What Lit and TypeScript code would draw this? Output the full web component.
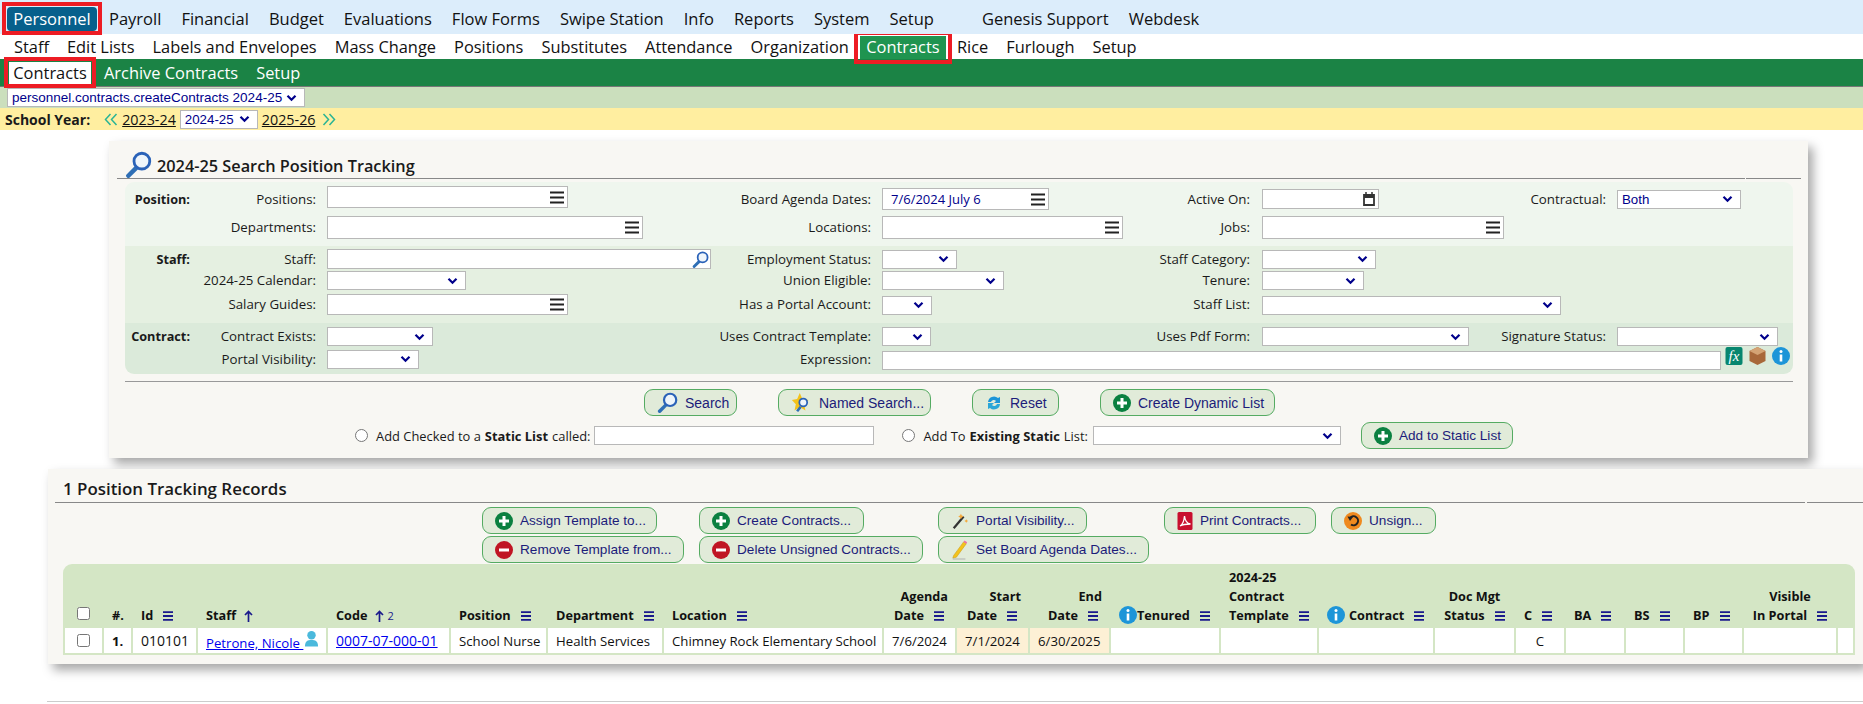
import { LitElement, html, css } from "lit";
import { customElement } from "lit/decorators.js";

const chev = html`<svg class="chev" width="11" height="8" viewBox="0 0 11 8"><path d="M1.500 1.800l4 4 4-4" fill="none" stroke="#00008b" stroke-width="2.200"/></svg>`;
const burger = html`<svg class="burger" width="14" height="13" viewBox="0 0 14 13"><path d="M0 1.500h14M0 6.500h14M0 11.500h14" stroke="#222" stroke-width="2"/></svg>`;
const tb = html`<svg class="tbi" width="10" height="10" viewBox="0 0 10 10"><path d="M0 1.200h10M0 5h10M0 8.800h10" stroke="#1a1a8c" stroke-width="1.800"/></svg>`;
const up = html`<svg class="upi" width="9" height="12" viewBox="0 0 9 12"><path d="M4.500 12V1.500M1 5l3.500-3.500L8 5" fill="none" stroke="#1a1a8c" stroke-width="1.700"/></svg>`;
const mag = (s = 18) => html`<svg width=${s} height=${s} viewBox="0 0 24 24"><path d="M3 22l7-7" stroke="#2f6fb5" stroke-width="4" stroke-linecap="round"/><circle cx="15" cy="9" r="7" fill="#eef5fb" stroke="#2a62b8" stroke-width="2.500"/></svg>`;
const plus = html`<svg width="18" height="18" viewBox="0 0 18 18"><circle cx="9" cy="9" r="9" fill="#0a8040"/><path d="M9 4v10M4 9h10" stroke="#fff" stroke-width="3"/></svg>`;
const minus = html`<svg width="18" height="18" viewBox="0 0 18 18"><circle cx="9" cy="9" r="9" fill="#c01524"/><path d="M4 9h10" stroke="#fff" stroke-width="3"/></svg>`;
const info = html`<svg class="info" width="18" height="18" viewBox="0 0 18 18"><circle cx="9" cy="9" r="9" fill="#1d95d8"/><circle cx="9" cy="4.500" r="1.500" fill="#fff"/><path d="M9 7.500v7" stroke="#fff" stroke-width="2.600"/></svg>`;
const dbl = (left: boolean) => html`<svg width="14" height="13" viewBox="0 0 14 13"><g transform=${left ? "" : "translate(14 0) scale(-1 1)"}><path d="M6.500 1L1.500 6.500l5 5.500M12.500 1l-5 5.500 5 5.500" fill="none" stroke="#2ab495" stroke-width="1.500"/></g></svg>`;
const icons: Record<string, unknown> = {
  search: mag(21),
  named: html`<svg width="21" height="21" viewBox="0 0 24 24"><path d="M10 1l3 7 7 1-5 5 1.500 7-6.500-4-6 4 1.500-7L1 9l6-1z" fill="#f3c21b"/><path d="M7 22l4-5" stroke="#2f6fb5" stroke-width="3"/><circle cx="14" cy="12" r="4.500" fill="#eef5fb" stroke="#2a62b8" stroke-width="2"/></svg>`,
  reset: html`<svg width="18" height="18" viewBox="0 0 18 18"><path d="M3 8a6 6 0 0 1 10-4l2-1v6h-6l2-2a3 3 0 0 0-5 1z" fill="#1d95d8"/><path d="M15 10a6 6 0 0 1-10 4l-2 1V9h6l-2 2a3 3 0 0 0 5-1z" fill="#2aa7d8"/></svg>`,
  plus, minus,
  wand: html`<svg width="18" height="20" viewBox="0 0 20 20"><path d="M3 18L14 5" stroke="#333" stroke-width="2.500"/><path d="M11 2l1 2 2 1-2 1-1 2-1-2-2-1 2-1zM17 8l.7 1.300 1.300.7-1.300.7-.7 1.300-.7-1.300L15 10l1.300-.7z" fill="#f4a93b"/></svg>`,
  pencil: html`<svg width="18" height="24" viewBox="0 0 20 24"><path d="M3 18L14 3l3 2L6 20l-4 1z" fill="#f3c21b" stroke="#c99a14" stroke-width=".6"/><path d="M14 3l1-1.500 3 2L17 5z" fill="#ee6fa8"/><path d="M2 22h14" stroke="#aaa" stroke-width="1"/></svg>`,
  pdf: html`<svg width="16" height="18" viewBox="0 0 15 18"><rect width="15" height="18" rx="1.500" fill="#c8102e"/><path d="M2.500 14c2-1 4-5 4.500-10 .5 5 3 7.500 6 8-3 0-7 0-10.500 2z" fill="none" stroke="#fff" stroke-width="1.300"/></svg>`,
  unsign: html`<svg width="18" height="18" viewBox="0 0 18 18"><circle cx="9" cy="9" r="9" fill="#ef8a1f"/><path d="M6 6a4.500 4.500 0 1 1 1 6.500" fill="none" stroke="#222" stroke-width="2"/><path d="M3.500 4.500L9 5 6 9z" fill="#222"/></svg>`,
};
const btn = (icon: string, label: string, w: number) =>
  html`<button class="btn" style="width:${w}px">${icons[icon]}<span>${label}</span></button>`;

const sel = (w: number, v = "") => html`<span class="sel" style="width:${w}px"><span>${v}</span>${chev}</span>`;
const pick = (w: number, v = "", h = 22) =>
  html`<span class="inp" style="width:${w}px;height:${h}px"><span class="val">${v}</span>${burger}</span>`;

/* Field grid helpers: col is a line of the section grid, row a grid row. */
const lab = (col: number, row: number, text: string, bold = false) =>
  html`<span class="lab ${bold ? "b" : ""}" style="grid-column:${col};grid-row:${row}">${text}</span>`;
const ctl = (col: number, row: number, content: unknown, nudge = 0, span = false) =>
  html`<div class="ctl" style="grid-column:${col}${span ? " / -1" : ""};grid-row:${row};margin-top:${nudge * 2}px">${content}</div>`;

type H = { l: string[]; w: number; ic?: unknown; k?: string; pre?: unknown };
const cols: H[] = [
  { l: [], w: 37, k: "c" }, { l: ["#."], w: 27 }, { l: ["Id"], w: 63, ic: tb }, { l: ["Staff"], w: 128, ic: up },
  { l: ["Code"], w: 121, ic: html`${up}<span class="two">2</span>` }, { l: ["Position"], w: 95, ic: tb }, { l: ["Department"], w: 114, ic: tb },
  { l: ["Location"], w: 218, ic: tb }, { l: ["Agenda", "Date"], w: 71, ic: tb, k: "r" }, { l: ["Start", "Date"], w: 71, ic: tb, k: "r" },
  { l: ["End", "Date"], w: 79, ic: tb, k: "r" }, { l: ["Tenured"], w: 108, ic: tb, pre: info }, { l: ["2024-25", "Contract", "Template"], w: 96, ic: tb },
  { l: ["Contract"], w: 114, ic: tb, pre: html`${info}<span class="sp4"></span>` }, { l: ["Doc Mgt", "Status"], w: 79, ic: tb, k: "c" }, { l: ["C"], w: 48, ic: tb },
  { l: ["BA"], w: 58, ic: tb }, { l: ["BS"], w: 57, ic: tb }, { l: ["BP"], w: 57, ic: tb }, { l: ["Visible", "In Portal"], w: 92, ic: tb, k: "c" },
  { l: [], w: 15 },
];
const gridCols = cols.map((c) => c.w + "px").join(" ");
const row: [unknown, string][] = [
  [html`<input type="checkbox" class="ck" />`, "c"], [html`<b>1.</b>`, ""], [html`<span class="num">010101</span>`, ""],
  [html`<a class="lnk low">Petrone, Nicole&nbsp;</a><svg class="person" width="15" height="18" viewBox="0 0 16 18"><circle cx="8" cy="5" r="4.500" fill="#4bb9dc"/><path d="M1 17c0-6 3-7 7-7s7 1 7 7z" fill="#4bb9dc"/></svg>`, ""],
  [html`<a class="lnk num">0007-07-000-01</a>`, ""], ["School Nurse", ""], ["Health Services", ""], ["Chimney Rock Elementary School", ""],
  ["7/6/2024", ""], ["7/1/2024", "tan"], ["6/30/2025", "tan"], ["", ""], ["", ""], ["", ""], ["", ""], ["C", "ctr"], ["", ""], ["", ""], ["", ""], ["", ""], ["", ""],
];

@customElement("app-root")
export class AppRoot extends LitElement {
  static styles = css`
    :host { display: block; width: 1863px; height: 704px; overflow: hidden; background: #fff; font-family: "Open Sans", "Noto Sans", sans-serif; font-size: 14px; color: #111; }
    * { box-sizing: border-box; }
    .nav { display: flex; white-space: nowrap; position: relative; }
    .it { display: block; }
    .n1 { height: 34px; background: #dcedfb; font-size: 16.500px; padding: 2px 0 0 2px; z-index: 3; }
    .n1 .it { padding: 0 10px; margin-top: 5px; line-height: 24px; }
    .redbox { display: block; flex: none; border: 4px solid #ed1c24; }
    .n1 .redbox { padding: 1px 1px 0; margin-right: -3px; height: 33px; }
    .n1 .act { display: block; width: 90px; height: 24px; line-height: 24px; text-align: center; background: #07608c; color: #fff; border-radius: 4px; }
    .n2 { height: 25px; font-size: 16.400px; padding-left: 5px; z-index: 2; }
    .n2 .it { padding: 0 9px; line-height: 25px; }
    .n2 .redbox { margin: -3px -4px -5px -4px; padding: 1px 1px 1px; height: 33px; position: relative; }
    .n2 .act { display: block; width: 88px; height: 23px; line-height: 22px; text-align: center; background: #1f9450; color: #fff; border-left: 1px solid #fff; border-right: 1px solid #fff; }
    .n3 { height: 28px; background: #1b8345; color: #fff; font-size: 16.400px; padding-left: 4px; border-bottom: 1px solid #777; z-index: 1; }
    .n3 .it { padding: 0 9px; line-height: 27px; }
    .n3 .redbox { margin: -2px -1px -3px 0; padding: 1px; height: 31px; }
    .n3 .act { display: block; width: 82px; height: 22px; line-height: 22px; text-align: center; background: #fff; color: #111; }
    .n4 { height: 21px; background: #cbdfbd; padding: 1px 0 0 7px; }
    .n5 { height: 22px; background: #ffeea0; display: flex; align-items: center; padding-left: 5px; }
    .n5 b { font-size: 14px; margin-right: 14px; color: #1a1a1a; }
    .n5 a { font-size: 14.300px; text-decoration: underline; color: #111; margin: 0 4px; }
    .sel, .inp { display: inline-flex; align-items: center; justify-content: space-between; background: #fff; border: 1px solid #b8b8b8; height: 19px; font: 13.300px "Liberation Sans", Arial, sans-serif; color: #00008b; padding: 0 7px 0 4px; flex: none; white-space: nowrap; }
    .chev { flex: none; }
    .inp { padding: 0 3px 0 8px; }
    .val { color: #00008b; font: 13px "Open Sans", sans-serif; }
    .panel { background: #f8f7f3; box-shadow: 5px 6px 10px rgba(0, 0, 0, .35); }
    .search { margin: 11px 0 0 109px; width: 1699px; height: 317px; padding: 0 0 0 8px; }
    h2 { margin: 0; display: flex; align-items: center; font-weight: 600; color: #1a1a1a; }
    .search h2 { height: 37px; padding: 12px 0 0 8px; gap: 5px; font-size: 16.300px; }
    .search h2 svg { margin-top: -3px; }
    .rule { display: flex; gap: 1px; height: 1px; margin-bottom: 3px; }
    .rule i { display: block; background: #888; height: 1px; }
    .fgrid { margin-left: 8px; width: 1668px; border-radius: 9px; overflow: hidden; font-size: 13.300px; color: #1a1a1a; }
    .sec { display: grid; grid-template-columns: 65px 126px 11px 393px 151px 11px 268px 100px 12px 241px 103px 11px 176px; }
    .s1 { background: #eff6ee; height: 64px; padding-top: 5px; grid-template-rows: 24px 24px; row-gap: 4px; }
    .s2 { background: #e5f0e1; height: 77px; padding-top: 3px; grid-template-rows: 20px 21px 24px; row-gap: 1px; }
    .s3 { background: #dbeada; height: 51px; padding-top: 4px; grid-template-rows: 19px 20px; row-gap: 3px; }
    .lab { justify-self: end; align-self: center; white-space: nowrap; line-height: 16px; margin-top: -1px; }
    .lab.b { font-weight: 700; font-size: 12.700px; }
    .ctl { display: flex; align-items: center; align-self: center; white-space: nowrap; }
    .ficons { display: flex; align-items: center; gap: 6px; margin: -8px 0 0 4px; }
    .hr { height: 1px; background: #999; margin: 7px 0 0 8px; width: 1668px; }
    .btn { display: inline-flex; align-items: center; gap: 7px; height: 27px; padding: 0 0 0 12px; background: #e1ebd9; border: 1px solid #55ab62; border-radius: 9px; font: 14px "Liberation Sans", Arial, sans-serif; color: #1c1c7a; flex: none; white-space: nowrap; }
    .btn svg { flex: none; }
    .b1 { display: flex; gap: 41px; margin-top: 7px; margin-bottom: 0; padding-left: 527px; }
    .b2 { display: flex; align-items: center; margin-top: 6px; height: 27px; padding-left: 238px; font-size: 12.900px; color: #1a1a1a; white-space: nowrap; }
    .b2 .btn { font-size: 13.600px; }
    .radio { width: 13px; height: 13px; margin: 0 8px 0 0; flex: none; }
    .b2 b { font-weight: 700; margin: 0 4px; }
    .lst { margin: 11px 0 0 48px; width: 1815px; height: 195px; padding-left: 7px; }
    .lst h2 { height: 33px; padding: 5px 0 0 8px; font-size: 16.900px; }
    .lst .rule { margin-bottom: 0; }
    .lst .btn { font-size: 13.600px; }
    .acts { display: flex; padding: 4px 0 0 427px; height: 61px; }
    .stack { display: flex; flex-direction: column; gap: 2px; flex: none; align-items: flex-start; }
    .tbl { display: grid; column-gap: 2px; margin-left: 8px; width: 1792px; height: 91px; background: #d4e6c5; border-radius: 9px 9px 0 0; padding: 0 2px 2px; grid-template-rows: 64px 25px; }
    .th { align-self: end; padding: 0 0 3px 8px; white-space: nowrap; font-weight: 700; font-size: 12.700px; line-height: 19px; color: #111; }
    .th.r { text-align: right; padding: 0 7px 3px 0; }
    .th.c { text-align: center; padding-left: 0; }
    .th.r .tbi { margin-right: 4px; }
    .tbi { margin-left: 10px; vertical-align: -1px; }
    .upi { margin-left: 8px; vertical-align: -2px; }
    .th .info { vertical-align: -4px; }
    .sp4 { display: inline-block; width: 4px; }
    .two { color: #1a1a8c; font-size: 11px; font-weight: 400; margin-left: 3px; }
    .td { background: #fff; display: flex; align-items: center; padding: 0 0 0 8px; font-size: 13.200px; white-space: nowrap; overflow: hidden; }
    .td.c { justify-content: center; padding: 0; }
    .td.ctr { justify-content: center; padding: 0; }
    .td.tan { background: #fdf0d5; }
    .lnk { color: #00e; text-decoration: underline; }
    .low { margin-top: 4px; }
    .num { font-size: 14px; }
    .person { margin: -3px 0 0 1px; flex: none; }
    .ck { width: 13px; height: 13px; margin: 0; }
    .foot { height: 1px; background: #ccc; margin: 37px 0 0 47px; width: 1816px; }
  `;

  render() {
    return html`
      <div class="nav n1">
        <span class="redbox"><span class="act">Personnel</span></span>
        ${["Payroll", "Financial", "Budget", "Evaluations", "Flow Forms", "Swipe Station", "Info", "Reports", "System", "Setup"].map((t) => html`<span class="it">${t}</span>`)}
        <span class="it" style="margin-left:28px">Genesis Support</span><span class="it">Webdesk</span>
      </div>
      <div class="nav n2">
        ${["Staff", "Edit Lists", "Labels and Envelopes", "Mass Change", "Positions", "Substitutes", "Attendance", "Organization"].map((t) => html`<span class="it">${t}</span>`)}
        <span class="redbox"><span class="act">Contracts</span></span>
        ${["Rice", "Furlough", "Setup"].map((t) => html`<span class="it">${t}</span>`)}
      </div>
      <div class="nav n3">
        <span class="redbox"><span class="act">Contracts</span></span>
        <span class="it">Archive Contracts</span><span class="it">Setup</span>
      </div>
      <div class="nav n4"><span class="sel" style="width:298px;font-size:13.500px"><span>personnel.contracts.createContracts 2024-25</span>${chev}</span></div>
      <div class="n5"><b>School Year:</b>${dbl(true)}<a>2023-24</a>${sel(78, "2024-25")}<a>2025-26</a><span style="width:3px"></span>${dbl(false)}</div>

      <div class="panel search">
        <h2>${mag(27)}2024-25 Search Position Tracking</h2>
        <div class="rule"><i style="width:1628px"></i><i style="width:55px"></i></div>
        <div class="fgrid">
          <div class="sec s1">
            ${lab(1, 1, "Position:", true)}
            ${lab(2, 1, "Positions:")}${ctl(4, 1, pick(241), -2)}
            ${lab(2, 2, "Departments:")}${ctl(4, 2, pick(316, "", 23))}
            ${lab(5, 1, "Board Agenda Dates:")}${ctl(7, 1, pick(167, "7/6/2024 July 6"))}
            ${lab(5, 2, "Locations:")}${ctl(7, 2, pick(241, "", 23))}
            ${lab(8, 1, "Active On:")}
            ${ctl(10, 1, html`<span class="inp" style="width:117px;height:20px"><span></span><svg width="12" height="14" viewBox="0 0 12 14"><path d="M1 3h10v10H1zM1 5h10" fill="none" stroke="#333" stroke-width="1.800"/><path d="M3 0v3M9 0v3" stroke="#333" stroke-width="1.500"/></svg></span>`)}
            ${lab(8, 2, "Jobs:")}${ctl(10, 2, pick(242, "", 23))}
            ${lab(11, 1, "Contractual:")}${ctl(13, 1, sel(124, "Both"))}
          </div>
          <div class="sec s2">
            ${lab(1, 1, "Staff:", true)}
            ${lab(2, 1, "Staff:")}${ctl(4, 1, html`<span class="inp" style="width:384px;height:20px;padding-right:1px"><span></span>${mag(17)}</span>`)}
            ${lab(2, 2, "2024-25 Calendar:")}${ctl(4, 2, sel(139))}
            ${lab(2, 3, "Salary Guides:")}${ctl(4, 3, pick(241, "", 21))}
            ${lab(5, 1, "Employment Status:")}${ctl(7, 1, sel(75))}
            ${lab(5, 2, "Union Eligible:")}${ctl(7, 2, sel(122))}
            ${lab(5, 3, "Has a Portal Account:")}${ctl(7, 3, sel(50), 1)}
            ${lab(8, 1, "Staff Category:")}${ctl(10, 1, sel(114))}
            ${lab(8, 2, "Tenure:")}${ctl(10, 2, sel(102))}
            ${lab(8, 3, "Staff List:")}${ctl(10, 3, sel(299), 1, true)}
          </div>
          <div class="sec s3">
            ${lab(1, 1, "Contract:", true)}
            ${lab(2, 1, "Contract Exists:")}${ctl(4, 1, sel(106))}
            ${lab(2, 2, "Portal Visibility:")}${ctl(4, 2, sel(92))}
            ${lab(5, 1, "Uses Contract Template:")}${ctl(7, 1, sel(49))}
            ${lab(5, 2, "Expression:")}
            ${ctl(7, 2, html`<span class="inp" style="width:839px;height:19px"></span>
              <span class="ficons">
                <svg width="18" height="18" viewBox="0 0 17 18"><rect width="17" height="18" rx="2" fill="#07866f"/><text x="8.500" y="14" text-anchor="middle" font-size="15" font-style="italic" font-family="Liberation Serif" fill="#fff">fx</text></svg>
                <svg width="17" height="18" viewBox="0 0 16 18"><path d="M8 0l8 4v10l-8 4-8-4V4z" fill="#a8683a"/><path d="M8 0l8 4-8 4-8-4z" fill="#d4a374"/></svg>
                ${info}
              </span>`, 1, true)}
            ${lab(8, 1, "Uses Pdf Form:")}${ctl(10, 1, sel(207), 0, true)}
            ${lab(11, 1, "Signature Status:")}${ctl(13, 1, sel(161))}
          </div>
        </div>
        <div class="hr"></div>
        <div class="b1">
          ${btn("search", "Search", 93)}${btn("named", "Named Search...", 153)}${btn("reset", "Reset", 87)}${btn("plus", "Create Dynamic List", 175)}
        </div>
        <div class="b2">
          <input type="radio" class="radio" />Add Checked to a<b>Static List</b>called:
          <span class="inp" style="width:280px;height:19px;margin-left:4px"></span>
          <input type="radio" class="radio" style="margin-left:28px" />Add To<b>Existing Static</b>List:
          <span class="sel" style="width:248px;margin-left:5px"><span></span>${chev}</span>
          <span style="margin-left:20px;display:flex">${btn("plus", "Add to Static List", 152)}</span>
        </div>
      </div>

      <div class="panel lst">
        <h2>1 Position Tracking Records</h2>
        <div class="rule"><i style="width:1751px"></i><i style="width:56px;margin-left:1px"></i></div>
        <div class="acts">
          <div class="stack" style="width:217px">${btn("plus", "Assign Template to...", 175)}${btn("minus", "Remove Template from...", 202)}</div>
          <div class="stack" style="width:239px">${btn("plus", "Create Contracts...", 165)}${btn("minus", "Delete Unsigned Contracts...", 224)}</div>
          <div class="stack" style="width:226px">${btn("wand", "Portal Visibility...", 149)}${btn("pencil", "Set Board Agenda Dates...", 211)}</div>
          <div class="stack" style="width:167px">${btn("pdf", "Print Contracts...", 152)}</div>
          <div class="stack">${btn("unsign", "Unsign...", 105)}</div>
        </div>
        <div class="tbl" style="grid-template-columns:${gridCols}">
          ${cols.map((c, i) => html`<div class="th ${c.k ?? ""}">${i === 0 ? html`<input type="checkbox" class="ck" />` : ""}${c.pre ?? ""}${c.l.map((t, j) => html`${t}${j === c.l.length - 1 ? c.ic ?? "" : html`<br />`}`)}</div>`)}
          ${row.map(([v, k]) => html`<div class="td ${k}">${v}</div>`)}
        </div>
      </div>
      <div class="foot"></div>
    `;
  }
}
